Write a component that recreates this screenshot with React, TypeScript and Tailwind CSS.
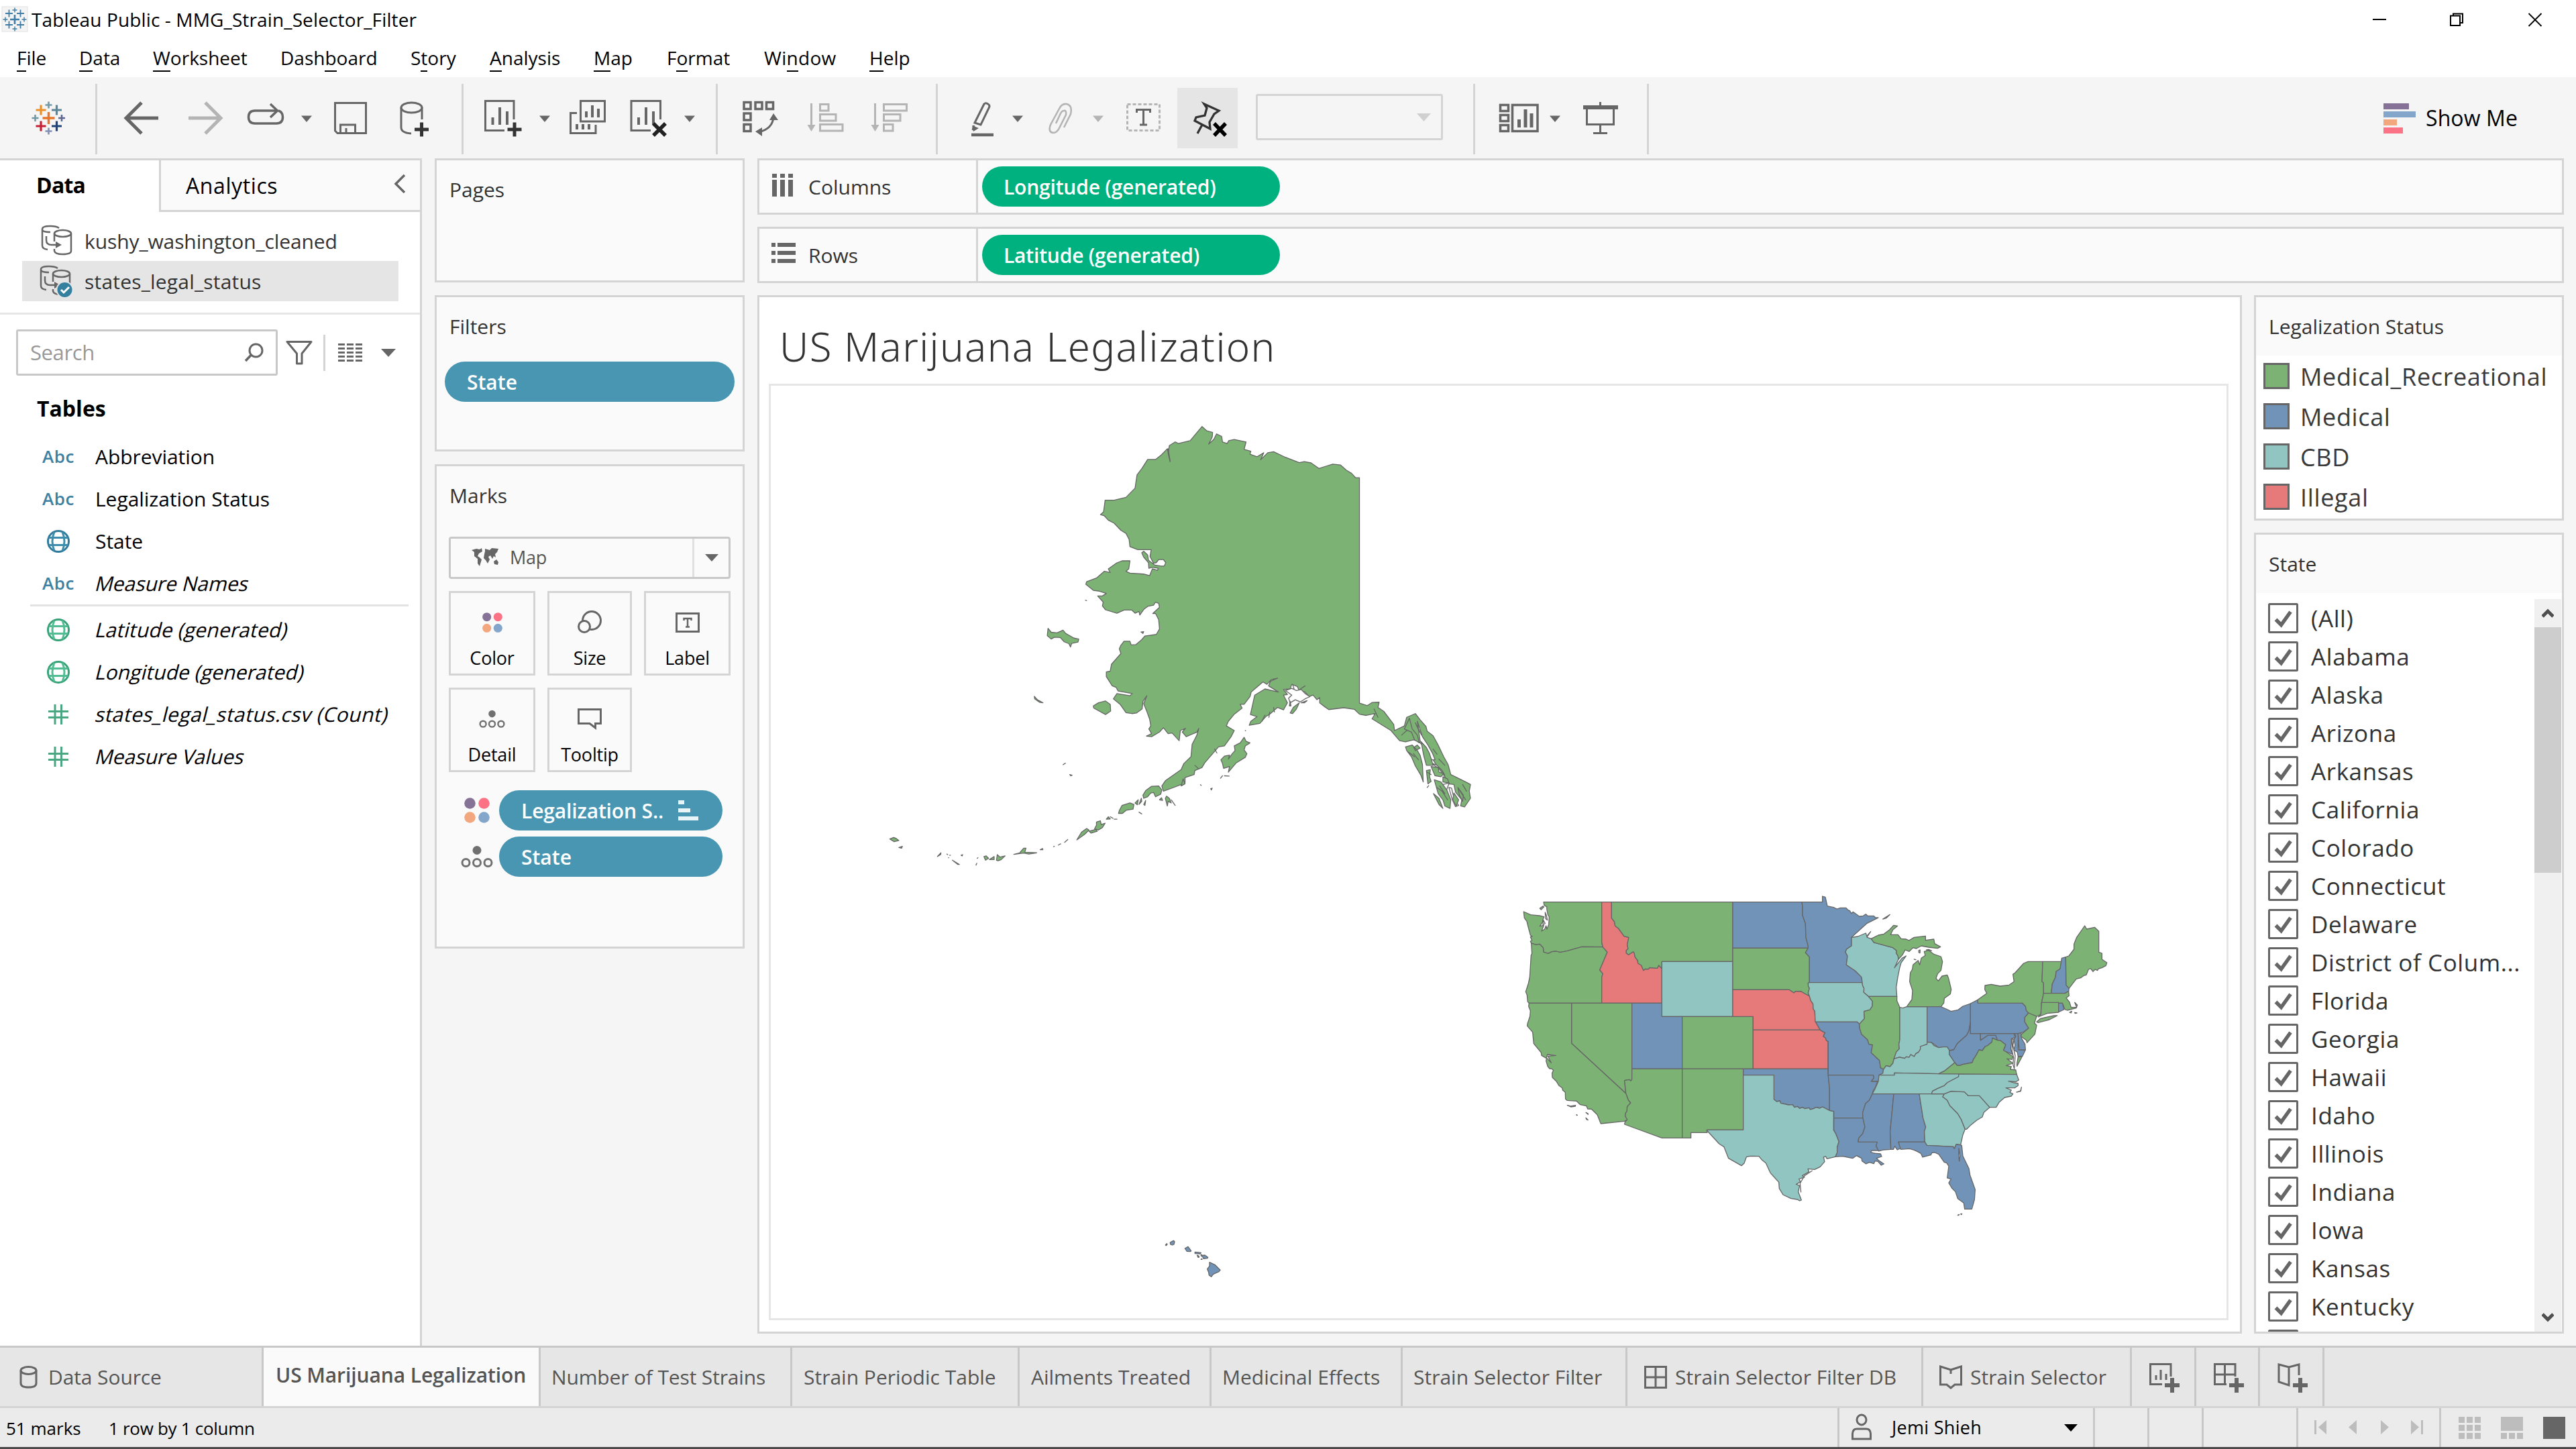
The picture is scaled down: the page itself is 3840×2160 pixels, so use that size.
import React from 'react';

type Kids = { children?: React.ReactNode };

/* A drawing whose viewBox is expressed in window coordinates. */
function Pic({ x, y, w, h, cls = '', children }: Kids & { x: number; y: number; w: number; h: number; cls?: string }) {
  return (
    <svg width={w} height={h} viewBox={`${x} ${y} ${w} ${h}`} fill="none" className={'block shrink-0 ' + cls}>
      {children}
    </svg>
  );
}

const GREEN = '#7cb274';
const BLUE = '#7193b8';
const TEAL = '#91c5c1';
const RED = '#e67979';

/* ---------- title bar and menu ---------- */

function Plus({ x, y, r, c, w }: { x: number; y: number; r: number; c: string; w: number }) {
  return <path d={`M${x - r} ${y}H${x + r}M${x} ${y - r}V${y + r}`} stroke={c} strokeWidth={w} />;
}

function TitleBar() {
  const c = '#3f7da6';
  return (
    <div className="flex h-[58px] shrink-0 items-center justify-between bg-white">
      <div className="flex items-center">
        <Pic x={2} y={8} w={40} h={40} cls="ml-[2px]">
          <rect x={3} y={9} width={38} height={37} fill="#f4f4f4" stroke="#e2e2e2" />
          <Plus x={22} y={28} r={7} c={c} w={2.6} />
          <Plus x={13.5} y={19} r={5.5} c={c} w={1.8} />
          <Plus x={30.5} y={19} r={5.5} c={c} w={1.8} />
          <Plus x={13.5} y={36} r={5.5} c={c} w={1.8} />
          <Plus x={30.5} y={36} r={5.5} c={c} w={1.8} />
          <Plus x={22} y={14} r={3.5} c={c} w={1.5} />
          <Plus x={22} y={42} r={3.5} c={c} w={1.5} />
          <Plus x={8} y={28} r={3.5} c={c} w={1.5} />
          <Plus x={36} y={28} r={3.5} c={c} w={1.5} />
        </Pic>
        <span className="ml-[5px] text-[28px] tracking-[0.13px] text-black">Tableau Public - MMG_Strain_Selector_Filter</span>
      </div>
      <Pic x={3530} y={12} w={310} h={30}>
        <path d="M3537 27H3557" stroke="#000" strokeWidth={2} />
        <path d="M3653 21.500H3667V36H3653ZM3657 21V18.500H3671V32H3667.500" stroke="#000" strokeWidth={2} />
        <path d="M3769.500 18L3788.500 37M3788.500 18L3769.500 37" stroke="#000" strokeWidth={1.8} />
      </Pic>
    </div>
  );
}

const U = ({ children }: Kids) => <span className="border-b-2 border-black">{children}</span>;

function MenuBar() {
  return (
    <div className="flex h-[57px] shrink-0 items-center bg-white pl-[25px] text-[28px] leading-[29px] text-black">
      <span className="w-[93px]"><U>F</U>ile</span>
      <span className="w-[110px]"><U>D</U>ata</span>
      <span className="w-[190px]"><U>W</U>orksheet</span>
      <span className="w-[194px]">Dash<U>b</U>oard</span>
      <span className="w-[118px]">S<U>t</U>ory</span>
      <span className="w-[155px]"><U>A</U>nalysis</span>
      <span className="w-[109px]"><U>M</U>ap</span>
      <span className="w-[145px]">F<U>o</U>rmat</span>
      <span className="w-[157px] tracking-[0.3px]">Wi<U>n</U>dow</span>
      <span className="w-[80px]"><U>H</U>elp</span>
    </div>
  );
}

/* ---------- toolbar ---------- */

const D = '#666666';
const G = '#b4b4b4';

function Sep({ cls }: { cls: string }) {
  return <div className={'-mt-[21px] h-[105px] w-[3px] shrink-0 bg-[#d4d4d4] ' + cls} />;
}
function Tool({ x, w, cls, children }: Kids & { x: number; w: number; cls: string }) {
  return <Pic x={x} y={146} w={w} h={60} cls={cls}>{children}</Pic>;
}
function Caret({ cls, c = D }: { cls: string; c?: string }) {
  return (
    <Pic x={0} y={146} w={16} h={60} cls={cls}>
      <path d="M0 172.500H16L8 182Z" fill={c} />
    </Pic>
  );
}

function Toolbar() {
  return (
    <div className="flex h-[121px] shrink-0 items-start bg-[#f5f5f5] pt-[31px]">
      <Tool x={46} w={54} cls="ml-[46px]">
        <Plus x={72.500} y={176} r={9} c="#e8762c" w={3.5} />
        <Plus x={61} y={164} r={7.5} c="#eb912b" w={3.2} />
        <Plus x={84.500} y={164} r={7.5} c="#5b879b" w={3.2} />
        <Plus x={61} y={188} r={7.5} c="#c72035" w={3.2} />
        <Plus x={84.500} y={188} r={7.5} c="#1f447e" w={3.2} />
        <Plus x={72.500} y={156.500} r={5} c="#7199a6" w={2.6} />
        <Plus x={72.500} y={195.500} r={5} c="#8091b5" w={2.6} />
        <Plus x={52.500} y={176} r={5} c="#7199a6" w={2.6} />
        <Plus x={92} y={176} r={5} c="#5c6692" w={2.6} />
      </Tool>
      <Sep cls="ml-[42px]" />
      <Tool x={184} w={54} cls="ml-[39px]">
        <path d="M236 176H189M211 153L188 176L211 199" stroke={D} strokeWidth={5} />
      </Tool>
      <Tool x={280} w={54} cls="ml-[42px]">
        <path d="M281 176H328M306 153L329 176L306 199" stroke={G} strokeWidth={5} />
      </Tool>
      <Tool x={366} w={60} cls="ml-[32px]">
        <path d="M414 165H380Q370.500 165 370.500 174.500Q370.500 184 380 184H412Q421.500 184 421.500 174.500Q421.500 167 415 165" stroke={D} strokeWidth={3.500} />
        <path d="M403 155L413.500 165L403 175" stroke={D} strokeWidth={3.500} />
      </Tool>
      <Caret cls="ml-[23px]" />
      <Tool x={496} w={54} cls="ml-[31px]">
        <path d="M499.500 153.500H545.500V198.500H503L499.500 195Z" stroke={D} strokeWidth={3} />
        <path d="M507.500 198V186H529.500V198M516 198V191" stroke={D} strokeWidth={3} />
      </Tool>
      <Tool x={594} w={50} cls="ml-[44px]">
        <ellipse cx={613.500} cy={160.500} rx={15.500} ry={7.500} stroke={D} strokeWidth={3} />
        <path d="M598 160V190Q598 198 613 199M629 160V178" stroke={D} strokeWidth={3} />
        <Plus x={628.500} y={193} r={10.500} c="#333" w={5} />
      </Tool>
      <Sep cls="ml-[44px]" />
      <Tool x={720} w={60} cls="ml-[29px]">
        <path d="M766 178V150.500H723.500V194.500H752" stroke={D} strokeWidth={3} />
        <path d="M734.500 186V175M745 186V160M756 186V166" stroke={D} strokeWidth={4} />
        <Plus x={767} y={193} r={10.500} c="#333" w={5} />
      </Tool>
      <Caret cls="ml-[24px]" />
      <Tool x={847} w={60} cls="ml-[27px]">
        <path d="M865.500 150.500H901.500V181H865.500Z" stroke={D} strokeWidth={3} />
        <path d="M874 175V166M883 175V157M892 175V162" stroke={D} strokeWidth={4} />
        <path d="M860 168.500H850.500V198.500H888V186" stroke={D} strokeWidth={3} />
        <path d="M860 193V185M869 193V185M878 193V185" stroke={D} strokeWidth={4} />
      </Tool>
      <Tool x={937} w={60} cls="ml-[30px]">
        <path d="M984.500 178V150.500H941V194.500H970" stroke={D} strokeWidth={3} />
        <path d="M952 186V175M963 186V160M974 186V166" stroke={D} strokeWidth={4} />
        <path d="M974 184L992 202M992 184L974 202" stroke="#222" strokeWidth={5.500} />
      </Tool>
      <Caret cls="ml-[23px]" />
      <Sep cls="ml-[31px]" />
      <Tool x={1105} w={58} cls="ml-[35px]">
        <path d="M1109 152.500H1119V162.500H1109ZM1126 152.500H1136V162.500H1126ZM1142.500 152.500H1152.500V162.500H1142.500ZM1109 169H1119V179H1109ZM1109 185.500H1119V195.500H1109Z" stroke={D} strokeWidth={3.500} />
        <path d="M1131 197Q1152 192 1153 174" stroke={D} strokeWidth={3} />
        <path d="M1147 179L1153 169L1160 179ZM1136 190L1126 196L1136 203Z" fill={D} />
      </Tool>
      <Tool x={1201} w={60} cls="ml-[38px]">
        <path d="M1209.500 154V190" stroke={G} strokeWidth={3} />
        <path d="M1203.500 186H1215.500L1209.500 196Z" fill={G} />
        <path d="M1222.500 155.500H1235V165H1222.500ZM1222.500 170.500H1246V180H1222.500ZM1222.500 185.500H1256V195H1222.500Z" stroke={G} strokeWidth={3} />
      </Tool>
      <Tool x={1296} w={60} cls="ml-[35px]">
        <path d="M1304.500 154V190" stroke={G} strokeWidth={3} />
        <path d="M1298.500 186H1310.500L1304.500 196Z" fill={G} />
        <path d="M1317.500 155.500H1351.500V165H1317.500ZM1317.500 170.500H1342V180H1317.500ZM1317.500 185.500H1331V195H1317.500Z" stroke={G} strokeWidth={3} />
      </Tool>
      <Sep cls="ml-[39px]" />
      <Tool x={1444} w={40} cls="ml-[46px]">
        <path d="M1453 183L1467 155Q1470 152 1474 156Q1476 158 1474 161L1462 186L1453 183ZM1452 187L1450 194" stroke={D} strokeWidth={3} />
        <path d="M1449 187L1459 191L1451 196Z" fill={D} />
        <path d="M1448 201H1481" stroke={D} strokeWidth={4.500} />
      </Tool>
      <Caret cls="ml-[25px]" />
      <Tool x={1560} w={42} cls="ml-[35px]">
        <path d="M1586 190L1596 170Q1599 157 1590 155Q1583 154 1579 162L1566 186Q1562 197 1570 198Q1576 198 1580 189L1589 171Q1590 164 1586 165Q1583 165 1581 169L1574 184" stroke={G} strokeWidth={2.600} />
      </Tool>
      <Caret cls="ml-[27px]" c={G} />
      <Tool x={1677} w={56} cls="ml-[32px]">
        <rect x={1680.500} y={155.500} width={48} height={39} stroke={G} strokeWidth={3} strokeDasharray="5 3" />
        <path d="M1694.500 168V163.500H1714.500V168M1704.500 163V186M1699 186H1710" stroke={D} strokeWidth={3} />
      </Tool>
      <div className="-mt-[15px] ml-[22px] flex h-[90px] w-[90px] shrink-0 items-center justify-center bg-[#e5e5e5]">
        <Pic x={1771} y={146} w={60} h={60}>
          <path d="M1796 155L1818 165L1811 170L1804 182L1805 192L1782 180L1784 175L1797 172L1800 161ZM1793 186L1786 199" stroke="#333" strokeWidth={3.300} />
          <path d="M1811 184L1828 202M1828 184L1811 202" stroke="#000" strokeWidth={5.500} />
        </Pic>
      </div>
      <div className="-mt-[6px] ml-[27px] flex h-[69px] w-[279px] shrink-0 items-center justify-end rounded-[3px] border-[3px] border-[#d4d4d4] pr-[15px]">
        <Pic x={0} y={0} w={21} h={12}><path d="M0 0H21L10.500 12Z" fill="#d0d0d0" /></Pic>
      </div>
      <Sep cls="ml-[45px]" />
      <Tool x={2233} w={64} cls="ml-[34px]">
        <path d="M2236.500 156.500H2248.500V165.500H2236.500ZM2236.500 171.500H2248.500V180.500H2236.500ZM2236.500 186.500H2248.500V195.500H2236.500ZM2254.500 156.500H2292V195.500H2254.500Z" stroke={D} strokeWidth={3.500} />
        <path d="M2264.500 190V178M2274 190V163M2283 190V169" stroke={D} strokeWidth={5} />
      </Tool>
      <Caret cls="ml-[13px]" />
      <Tool x={2358} w={56} cls="ml-[32px]">
        <path d="M2385.500 152V158M2365.500 160V185.500H2405.500V160M2385.500 186V198" stroke={D} strokeWidth={3} />
        <path d="M2360 157H2412V163H2360ZM2375 197H2396V200H2375Z" fill={D} />
      </Tool>
      <Sep cls="ml-[41px]" />
      <Pic x={3550} y={146} w={52} h={60} cls="ml-[1093px]">
        <path d="M3552 154H3590V163H3552Z" fill="#867297" />
        <path d="M3552 166H3600V175H3552Z" fill="#83a6ca" />
        <path d="M3552 178H3572V187H3552Z" fill="#f2a77f" />
        <path d="M3552 190H3581V199H3552Z" fill="#fb7384" />
      </Pic>
      <span className="ml-[13px] pt-[7px] text-[32px] leading-[45px] tracking-[0.1px] text-black">Show Me</span>
    </div>
  );
}

/* ---------- data pane ---------- */

function Cylinders({ active }: { active?: boolean }) {
  return (
    <Pic x={0} y={0} w={52} h={50} cls="ml-[60px]">
      <path d="M28 6Q24 3 15 3Q3 3 3 7.500V32Q3 37 11 38M3 8Q3 12 15 12M9 18V24Q9 31 17 31H26" stroke={D} strokeWidth={2.500} />
      <path d="M23 26L32 31L23 36Z" fill={D} />
      <ellipse cx={33.500} cy={14} rx={12.500} ry={5} stroke={D} strokeWidth={2.500} />
      <path d="M21 14V26M21 37V40Q22 45 33.500 45Q46 45 46 40V14" stroke={D} strokeWidth={2.500} />
      {active && (
        <>
          <circle cx={38.500} cy={38} r={13} fill="#e5e5e5" />
          <circle cx={38.500} cy={38} r={11} fill="#35809f" />
          <path d="M33 38L37 42L45 34" stroke="#fff" strokeWidth={3} />
        </>
      )}
    </Pic>
  );
}

function Globe({ c, t }: { c: string; t: string }) {
  return (
    <Pic x={0} y={0} w={34} h={34}>
      <circle cx={17} cy={17} r={15.500} fill="#fff" stroke={c} strokeWidth={3} />
      <path d="M11 3Q5 17 11 31M23 3Q29 17 23 31M3 11.500H31M3 22.500H31" stroke={t} strokeWidth={3} />
    </Pic>
  );
}
const Hash = () => (
  <Pic x={0} y={0} w={32} h={32}>
    <path d="M1 11.500H31M1 20.500H31M11 1V31M20.500 1V31" stroke="#4aa781" strokeWidth={3} />
  </Pic>
);
const Abc = () => <span className="text-[26px] font-semibold tracking-[0.5px] text-[#3c81a1]">Abc</span>;

function Field({ icon, children, italic, track = '' }: Kids & { icon: React.ReactNode; italic?: boolean; track?: string }) {
  return (
    <div className="flex h-[63px] items-center">
      <div className="flex w-[142px] shrink-0 justify-center pl-[32px]">{icon}</div>
      {italic ? (
        <span className={'ml-px inline-block -skew-x-[14deg] whitespace-nowrap text-[30px] text-black ' + track}>{children}</span>
      ) : (
        <span className="whitespace-nowrap text-[30px] tracking-[-0.05px] text-black">{children}</span>
      )}
    </div>
  );
}

function DataPane() {
  return (
    <div className="flex w-[629px] shrink-0 flex-col border-t-[3px] border-r-[3px] border-[#d4d4d4] bg-white">
      <div className="flex h-[77px] shrink-0">
        <div className="flex w-[237px] items-center pb-[3px] pl-[54px] text-[32px] font-bold tracking-[-0.8px] text-black">Data</div>
        <div className="flex flex-1 items-center justify-between border-b-[3px] border-l-[3px] border-[#d4d4d4] bg-[#fafafa] pl-[37px] pr-[21px]">
          <span className="pt-px text-[32px] tracking-[0.6px] text-black">Analytics</span>
          <Pic x={0} y={0} w={18} h={30} cls="-mt-[4px]"><path d="M16 2L3 15L16 28" stroke={D} strokeWidth={3.500} /></Pic>
        </div>
      </div>
      <div className="mt-[13px] flex h-[60px] shrink-0 items-center">
        <Cylinders />
        <span className="ml-[14px] text-[30px] tracking-[-0.1px] text-[#333]">kushy_washington_cleaned</span>
      </div>
      <div className="ml-[33px] flex h-[60px] w-[561px] shrink-0 items-center bg-[#e5e5e5]">
        <div className="-ml-[35px]"><Cylinders active /></div>
        <span className="ml-[16px] text-[30px] tracking-[0.2px] text-[#333]">states_legal_status</span>
      </div>
      <div className="mt-[17px] h-[3px] shrink-0 bg-[#e6e6e6]" />
      <div className="mt-[22px] flex h-[69px] shrink-0 items-center">
        <div className="ml-[24px] flex h-[69px] w-[390px] items-center justify-between rounded-[3px] border-[3px] border-[#c8c8c8] pr-[17px] pl-[18px]">
          <span className="text-[31px] tracking-[-0.4px] text-[#999]">Search</span>
          <Pic x={0} y={0} w={30} h={30}>
            <circle cx={17.500} cy={11.500} r={9.500} stroke={D} strokeWidth={3} />
            <path d="M10.500 18L2 27" stroke={D} strokeWidth={3.500} />
          </Pic>
        </div>
        <Pic x={0} y={0} w={40} h={40} cls="ml-[12px]">
          <path d="M2 3.500H38L24 21V36H16.500V21Z" stroke={D} strokeWidth={3} strokeLinejoin="round" />
        </Pic>
        <div className="ml-[16px] h-[54px] w-[3px] bg-[#d4d4d4]" />
        <Pic x={0} y={0} w={36} h={29} cls="ml-[19px]">
          <path d="M0 2.500H36M0 8.500H36M0 14.500H36M0 20.500H36M0 26.500H36" stroke={D} strokeWidth={3} strokeDasharray="10 3" />
        </Pic>
        <Pic x={0} y={0} w={22} h={12} cls="ml-[28px]"><path d="M0 0H22L11 12Z" fill={D} /></Pic>
      </div>
      <div className="mt-[19px] flex h-[60px] shrink-0 items-center pl-[55px] text-[32px] font-bold text-black">Tables</div>
      <div className="mt-[10px]">
        <Field icon={<Abc />}>Abbreviation</Field>
        <Field icon={<Abc />}>Legalization Status</Field>
        <Field icon={<Globe c="#2f7a9b" t="#3c8cae" />}>State</Field>
        <Field icon={<Abc />} italic>Measure Names</Field>
        <div className="mr-[17px] mb-[3px] ml-[45px] h-[3px] bg-[#e2e2e2]" />
        <Field icon={<Globe c="#36a277" t="#52bd92" />} italic track="tracking-[0.15px]">Latitude (generated)</Field>
        <Field icon={<Globe c="#36a277" t="#52bd92" />} italic track="tracking-[0.1px]">Longitude (generated)</Field>
        <Field icon={<Hash />} italic track="tracking-[0.5px]">states_legal_status.csv (Count)</Field>
        <Field icon={<Hash />} italic>Measure Values</Field>
      </div>
    </div>
  );
}

/* ---------- cards ---------- */

function Card({ title, cls, children }: Kids & { title: string; cls: string }) {
  return (
    <div className={'flex shrink-0 flex-col border-[3px] border-[#d4d4d4] bg-[#fafafa] ' + cls}>
      <div className="flex h-[87px] shrink-0 items-center pl-[19px] text-[30px] text-[#333]">{title}</div>
      {children}
    </div>
  );
}

function Dots({ s }: { s: number }) {
  return (
    <svg width={s} height={s} viewBox="0 0 38 38" className="block shrink-0">
      <circle cx={8.500} cy={8.500} r={8.300} fill="#867297" />
      <circle cx={29.500} cy={8.500} r={8.300} fill="#fb7384" />
      <circle cx={8.500} cy={29.500} r={8.300} fill="#f2a77f" />
      <circle cx={29.500} cy={29.500} r={8.300} fill="#83a6ca" />
    </svg>
  );
}
function DetailIcon({ w }: { w: number }) {
  return (
    <svg width={w} viewBox="0 0 48 34" fill="none" className="block shrink-0">
      <circle cx={24} cy={7.500} r={6.500} fill="#707070" />
      <g stroke="#707070" strokeWidth={3}>
        <circle cx={7.500} cy={26} r={5.500} />
        <circle cx={24} cy={26} r={5.500} />
        <circle cx={40.500} cy={26} r={5.500} />
      </g>
    </svg>
  );
}

function MarkButton({ label, cls, children }: Kids & { label: string; cls: string }) {
  return (
    <div className={'flex h-[126px] flex-col items-center border-[3px] border-[#d4d4d4] ' + cls}>
      <div className="mt-[18px] flex h-[52px] items-center">{children}</div>
      <span className="mt-[8px] text-[27px] leading-[38px] tracking-[-0.2px] text-black">{label}</span>
    </div>
  );
}

function Cards() {
  return (
    <div className="ml-[19px] flex w-[462px] shrink-0 flex-col gap-[19px]">
      <Card title="Pages" cls="h-[185px]" />
      <Card title="Filters" cls="h-[233px]">
        <div className="ml-[12px] mt-[9px] flex h-[60px] w-[432px] items-center rounded-full bg-[#4996b2] pl-[33px] text-[30px] font-semibold text-white">State</div>
      </Card>
      <Card title="Marks" cls="h-[722px]">
        <div className="mt-[18px] ml-[18px] flex h-[63px] w-[420px] shrink-0 rounded-[4px] border-[3px] border-[#c8c8c8]">
          <div className="flex w-[363px] items-center border-r-[3px] border-[#e0e0e0] pl-[31px]">
            <Pic x={0} y={0} w={40} h={30}>
              <path d="M0 3L7 1L12 2L15 0L16 5L11 8L9 12L12 14L15 17L12 27L9 23L9 16L4 12L4 6Z" fill={D} />
              <path d="M20 1L27 3L30 0L40 1L38 6L35 9L36 14L33 12L31 16L28 11L25 13L27 17L24 23L21 18L18 15L19 9L20 5Z" fill={D} />
              <path d="M33 20L37 17L40 21L39 25L34 24Z" fill={D} />
            </Pic>
            <span className="ml-[17px] text-[27px] tracking-[-0.3px] text-[#555]">Map</span>
          </div>
          <div className="flex flex-1 items-center justify-center">
            <Pic x={0} y={0} w={20} h={11}><path d="M0 0H20L10 11Z" fill={D} /></Pic>
          </div>
        </div>
        <div className="mt-[18px] ml-[18px] grid w-[420px] shrink-0 grid-cols-[129px_126px_129px] gap-x-[18px] gap-y-[18px]">
          <MarkButton label="Color" cls="w-[129px]"><Dots s={30} /></MarkButton>
          <MarkButton label="Size" cls="w-[126px]">
            <Pic x={0} y={0} w={38} h={36}>
              <circle cx={22} cy={15} r={13.500} stroke={D} strokeWidth={3} />
              <circle cx={11} cy={24} r={8.500} stroke={D} strokeWidth={3} fill="#fafafa" />
            </Pic>
          </MarkButton>
          <MarkButton label="Label" cls="w-[129px]">
            <Pic x={0} y={0} w={36} h={30}>
              <path d="M1.500 1.500H34.500V28.500H1.500Z" stroke={D} strokeWidth={3} />
              <path d="M12.500 12V9H23.500V12M18 9V21M15 21.500H21" stroke={D} strokeWidth={2.500} />
            </Pic>
          </MarkButton>
          <MarkButton label="Detail" cls="w-[129px]"><DetailIcon w={39} /></MarkButton>
          <MarkButton label="Tooltip" cls="w-[126px]">
            <Pic x={0} y={0} w={36} h={32}>
              <path d="M1.500 1.500H34.500V22.500H26.500V29L18 22.500H1.500Z" stroke={D} strokeWidth={3} />
            </Pic>
          </MarkButton>
        </div>
        <div className="mt-[27px] flex h-[60px] shrink-0 items-center">
          <div className="flex w-[93px] justify-center pl-[26px]"><Dots s={38} /></div>
          <div className="flex h-[60px] w-[333px] items-center rounded-full bg-[#4996b2] pl-[33px] text-[30px] font-semibold tracking-[-0.15px] text-white">
            Legalization S..
            <Pic x={0} y={0} w={30} h={30} cls="ml-[22px]">
              <path d="M0 0H9V6H0ZM0 12H18V18H0ZM0 24H30V30H0Z" fill="#e9f4f8" />
            </Pic>
          </div>
        </div>
        <div className="mt-[9px] flex h-[60px] shrink-0 items-center">
          <div className="flex w-[93px] justify-center pl-[26px]"><DetailIcon w={48} /></div>
          <div className="flex h-[60px] w-[333px] items-center rounded-full bg-[#4996b2] pl-[33px] text-[30px] font-semibold text-white">State</div>
        </div>
      </Card>
    </div>
  );
}

/* ---------- shelves ---------- */

function Shelf({ label, pill, children }: Kids & { label: string; pill: string }) {
  return (
    <div className="flex h-[84px] shrink-0 items-center border-[3px] border-[#d4d4d4] bg-[#fafafa]">
      <div className="flex h-full w-[326px] items-center border-r-[3px] border-[#d4d4d4] pl-[18px]">
        {children}
        <span className="ml-[23px] text-[30px] text-[#333]">{label}</span>
      </div>
      <div className="ml-[6px] flex h-[60px] w-[444px] items-center rounded-full bg-[#00b180] pl-[32px] text-[30px] font-semibold tracking-[-0.2px] text-white">{pill}</div>
    </div>
  );
}

/* ---------- map ---------- */

type Shape = [string, string];

const WEST: Shape[] = [
  [GREEN, 'M183,104L443,104L443,285L448,305L354,304L290,322L257,329L240,324L220,326L204,334L183,328L181,308L165,292L150,295L128,288L124,280L131,275L124,260L132,258L124,252L121,240L114,215L108,190L97,175L94,147L125,161L165,165L185,170L180,182L178,195L166,212L184,208L174,234L188,225L194,210L198,225L206,205L208,170L202,160L198,140L197,125L186,119Z'],
  [GREEN, 'M128,288L150,295L165,292L181,308L183,328L204,334L220,326L240,324L257,329L290,322L354,304L448,305L468,328L434,408L448,424L443,440L443,556L118,556L112,550L109,520L103,505L115,468L121,440L127,342L131,335Z'],
  [RED, 'M443,104L487,104L487,176L500,192L503,211L518,222L543,257L564,262L557,295L561,313L553,320L553,332L563,340L583,326L588,331L592,350L604,366L605,378L620,387L630,410L637,403L652,404L657,397L692,400L698,387L712,402L712,556L443,556L443,440L448,424L434,408L468,328L448,305L443,285Z'],
  [GREEN, 'M487,104L1029,104L1029,370L712,370L712,402L698,387L692,400L657,397L652,404L637,403L630,410L620,387L605,378L604,366L592,350L588,331L583,326L563,340L553,332L553,320L561,313L557,295L564,262L543,257L518,222L503,211L500,192L487,176Z'],
  [TEAL, 'M712,370H1029V616H712Z'],
  [GREEN, 'M308,556H578V897L573,904L566,898L545,902L551,960L308,736Z'],
  [BLUE, 'M578,556H712V616H803V850H578Z'],
  [GREEN, 'M803,616H1120V850H803Z'],
  [GREEN, 'M578,850H803V1159H712L545,1098L547,1088L557,1077L548,1062L549,1048L555,1040L557,1018L572,1002L562,990L551,960L545,902L566,898L573,904L578,897Z'],
  [GREEN, 'M803,850H1076V1123H913L915,1135H842V1159H803Z'],
  [GREEN, 'M118,556H308V736L551,960L562,990L572,1002L557,1018L555,1040L549,1048L548,1062L557,1077L545,1084L439,1095L423,1055L397,1030L380,1029L375,1016L347,1010L330,994L288,991L281,985L280,955L268,945L267,936L252,925L241,907L222,888L221,869L227,857L220,850L210,849L202,840L194,815L196,803L174,790L172,777L139,737L134,686L110,658L111,648L122,615L124,590L116,570Z'],
  ['#fff', 'M196,800L200,786L238,790L202,793L217,823Z'],
  ['#fff', 'M190,150L196,165L200,185L192,178ZM182,185L190,200L180,205Z'],
  [BLUE, 'M1029,104H1338L1341,125L1341,163L1354,200L1356,262L1366,300L1366,310H1029Z'],
  [GREEN, 'M1029,310H1366L1354,330L1372,350V464L1366,466L1367,480L1372,490L1366,510L1372,525L1350,513L1335,504L1310,503L1302,510L1281,496H1029Z'],
  [RED, 'M1029,496H1281L1302,510L1310,503L1335,504L1350,513L1372,525L1378,545L1388,560L1389,582L1396,592L1398,638L1408,655L1420,676H1120V616H1029Z'],
  [RED, 'M1120,676H1420L1435,685L1442,688L1434,704L1444,712L1447,722L1455,728V850H1120Z'],
  [BLUE, 'M1076,850H1455L1456,880L1462,940L1462,1036L1430,1020L1418,1026L1402,1022L1390,1028L1376,1032L1370,1024L1352,1028L1340,1022L1328,1027L1318,1018L1305,1022L1296,1010L1278,1011L1243,1003L1240,993L1225,996L1213,986V878H1076Z'],
  [TEAL, 'M1076,878H1213V986L1225,996L1240,993L1243,1003L1278,1011L1296,1010L1305,1022L1318,1018L1328,1027L1340,1022L1352,1028L1370,1024L1376,1032L1390,1028L1402,1022L1418,1026L1430,1020L1462,1036L1480,1040V1124L1490,1140L1504,1175L1496,1200L1496,1225L1488,1243L1450,1252L1445,1242L1435,1245L1440,1265L1420,1288L1395,1300L1365,1297L1370,1310L1340,1328L1350,1335L1325,1342L1332,1355L1313,1366L1328,1372L1322,1400L1336,1437L1328,1440L1318,1434L1290,1430L1254,1413L1237,1385L1235,1357L1215,1335L1197,1315L1177,1271L1160,1258L1146,1241L1108,1240L1090,1244L1080,1272L1068,1283L1010,1250L990,1199L968,1185L913,1125V1123H1076Z'],
  [GREEN, 'M289,1013L304,1017L326,1013L325,1017L305,1020ZM330,1055L334,1057L331,1058ZM372,1045L382,1050L382,1054ZM372,1069L382,1079L375,1076ZM166,132L180,122L184,126L172,138Z'],
  ['none', 'M1334,1402L1330,1362L1350,1328L1385,1305'],
];

const EAST: Shape[] = [
  [BLUE, 'M18,104H110V78L123,82L132,122L160,128L175,135L190,130L215,130L225,140L232,143L240,155L247,148L275,168L292,166L304,158L312,166L340,166L347,174L360,174L308,200L240,262L240,300L218,315L213,328L222,345L217,385L257,412L285,440L288,464H52V350L34,330L46,310L46,300L36,262L34,200L21,163L21,125Z'],
  [TEAL, 'M46,466L52,464H288L290,478L296,490L295,508L316,526L334,548L333,570L322,586L296,593L298,625L275,650L265,640H80L78,638L76,592L69,582L68,560L58,545L52,525L46,510L52,490L47,480Z'],
  [BLUE, 'M80,640H265L275,650L277,670L285,695L312,720L318,740L334,742L328,778L365,812L370,845L383,852L380,870L363,885L360,906L328,906L340,890L337,878H136V850V728L127,722L124,712L114,704L122,688L115,685L100,676L88,655Z'],
  [BLUE, 'M136,878H337L340,890L328,906H356L348,930L336,950L333,962L320,990L303,1005L298,1020L290,1045L291,1070H161V1040L142,1036V940L136,880Z'],
  [BLUE, 'M161,1070H291L296,1090L300,1110L290,1140L272,1160L270,1177H355L350,1195L362,1215L330,1215L326,1222L340,1227L370,1230L375,1242L352,1250L365,1262L385,1275L373,1281L358,1264L345,1262L340,1274L320,1268L305,1275L287,1262L285,1250L262,1238L245,1250L200,1241L168,1243L176,1225V1200L184,1175L170,1140L161,1124Z'],
  [TEAL, 'M240,262L268,258L304,243L310,262L328,268L340,285L425,308L442,322L440,332L448,345L450,360L432,398L466,355L484,345L462,375L455,400L447,440L440,485L443,526H316L295,508L296,490L290,478L288,464L285,440L257,412L217,385L222,345L213,328L218,315L240,300Z'],
  [GREEN, 'M316,526H443L443,545L456,575V720L452,740L454,760L440,775L430,805L425,825L412,840L395,836L383,852L370,845L365,812L328,778L334,742L318,740L312,720L285,695L277,670L275,650L298,625L296,593L322,586L333,570L334,548Z'],
  [TEAL, 'M456,575L470,578L487,572H578V740L548,750L548,762L540,775L528,782L520,795L505,786L498,798L485,796L478,803L455,798L430,805L440,775L454,760L452,740L456,720Z'],
  [GREEN, 'M487,572L510,540L513,500L500,460L503,420L512,405L515,385L538,365L545,385L552,355L570,343L565,325L585,320L610,338L640,348L647,370L640,410L625,425L618,445L628,457L645,435L668,430L674,445L686,495L682,515L655,535L653,555L640,572Z'],
  [GREEN, 'M328,268L360,252L385,247L410,228L428,208L446,211L425,228L415,250L448,250L462,268L485,270L497,276L520,262L571,256V275L608,270L612,290L638,304L625,311L585,306L552,300L530,312L515,308L498,325L480,318L468,340L450,360L448,345L440,332L442,322L425,308L340,285ZM380,180L412,160L395,176ZM310,260L326,236L312,252ZM541,320L547,318L546,332L541,330ZM575,318L598,322L585,316ZM520,360L528,362Z'],
  [BLUE, 'M578,572H640L670,585L685,593L717,586L738,570L772,558V640L765,680L755,700L738,715L715,735L710,742L697,765L678,768L668,752L630,755L598,732L578,730Z'],
  [TEAL, 'M578,740L578,730L598,732L608,745L630,755L650,752L668,752L678,768L677,785L702,822L655,860L630,872L432,868V878H363L380,870L383,852L395,836L412,840L425,825L430,805L455,798L478,803L485,796L498,798L505,786L520,795L528,782L540,775L548,762L548,750Z'],
  [TEAL, 'M363,878H432V868L630,872H719V885L690,900L668,912L655,925L625,938L602,950L598,962H333L345,940L360,906Z'],
  [BLUE, 'M333,962H429L413,1130L416,1210L385,1212L362,1218L350,1195L355,1177H270L272,1160L290,1140L300,1110L291,1070L290,1045L298,1020L303,1005L320,990Z'],
  [BLUE, 'M429,962H543L560,1070L572,1110L566,1130L568,1177H450L460,1205L445,1212L433,1196L428,1210H416L413,1130Z'],
  [TEAL, 'M543,962H655L648,975L668,990L680,1015L715,1050L730,1075L748,1120L738,1145L728,1190L708,1188L700,1207L695,1198L577,1192L568,1177L566,1130L572,1110L560,1070Z'],
  [BLUE, 'M450,1177H568L577,1192L695,1198L700,1207L708,1188L728,1190L733,1193L738,1240L765,1295L770,1325L793,1390L790,1435L778,1477H746L742,1450L715,1430L705,1400L690,1385L675,1360L685,1343L668,1338L675,1285L665,1270L655,1268L630,1232L612,1224L600,1225L595,1235L558,1245L550,1228L535,1220L520,1213L500,1207L460,1210ZM715,1504L722,1501L719,1505ZM728,1499L734,1498L731,1502Z'],
  [TEAL, 'M655,962L685,950L745,953L762,970H812L858,1022L832,1045L825,1065L800,1080L775,1100L755,1120L748,1120L730,1075L715,1050L680,1015L668,990L648,975Z'],
  [TEAL, 'M719,873H978L988,900L975,908L942,905L965,912L985,915L985,925L970,935L930,935L955,945L948,955L962,962L955,972L925,978L900,1000L887,1022H858L812,970H762L745,953L685,950L655,962H598L602,950L625,938L655,925L668,912L690,900L719,885ZM978,954L997,950L1000,932L996,948Z'],
  [BLUE, 'M772,640V692H817V722L850,700L885,700L893,722L870,712L868,730L850,745L838,750L825,768L810,765L800,785L785,808L780,822L738,830L725,835L712,834L702,822L677,785L678,768L697,765L710,742L715,735L738,715L755,700L765,680Z'],
  [GREEN, 'M630,872L655,860L702,822L712,834L725,835L738,830L780,822L785,808L800,785L810,765L825,768L838,750L850,745L868,730L870,712L893,722L905,722L930,742L920,765L940,780L962,795L958,808L935,805L962,825L932,835L955,840L950,852L975,855L978,875ZM1003,795L980,838L980,825L985,797Z'],
  [BLUE, 'M817,692H985V765H1018L1005,793L985,795L982,775L965,765L972,745L966,720L975,705L965,685L972,710L955,715L955,735L952,760L960,785L920,768L930,742L905,722L893,722L885,700L850,700L817,722Z'],
  [BLUE, 'M985,692L998,686L1000,712L1016,740L1018,765H990Z'],
  [BLUE, 'M772,558L805,541V556H1004L1018,570L1022,590L1032,600L1015,620L1015,640L1032,668L1010,685L985,692H772Z'],
  [GREEN, 'M1032,600L1068,615L1058,645L1068,655L1060,695L1025,733L1022,722L998,705L1000,695L1032,668L1015,640L1015,620Z'],
  [GREEN, 'M805,541L845,512L836,495L837,477L865,472L905,480L945,475L967,460L962,427L972,420L1010,378L1030,370H1095L1092,460L1099,465V512L1090,553L1087,606L1075,612L1068,615L1032,600L1022,590L1018,570L1004,556H805ZM1068,640L1085,625L1145,612L1160,612L1125,630L1075,643Z'],
  [GREEN, 'M1095,370H1180L1173,403L1155,415L1152,440L1138,470L1133,512H1099V465L1092,460Z'],
  [BLUE, 'M1180,355L1198,350L1200,475L1213,490L1211,503L1195,512H1133L1138,470L1152,440L1155,415L1173,403Z'],
  [GREEN, 'M1198,350L1212,345L1235,315V292L1247,262L1283,210L1292,225L1327,217L1346,235V328L1360,333V360L1382,375L1378,388L1360,398L1345,402L1340,410L1330,405L1320,415L1310,402L1300,405L1290,430L1280,432L1265,443L1245,448L1213,490L1200,475Z'],
  [GREEN, 'M1099,512H1195L1211,503L1213,523L1200,533L1215,552L1222,575L1247,575L1238,553L1250,565L1245,578L1205,588L1195,585L1183,556H1090ZM1215,597L1225,592L1222,600ZM1238,598L1248,600L1240,602Z'],
  [GREEN, 'M1090,553H1166V597L1115,602L1075,618L1087,606Z'],
  [BLUE, 'M1166,556H1183L1190,585L1166,596Z'],
  ['#fff', 'M720,1205L725,1240L722,1263L719,1235ZM960,715L966,720L962,745L966,765L972,790L968,850L962,830L965,800L958,770Z'],
];

const ALASKA =
  'M838,78L850,92L865,97L864,112L855,135L868,120L875,102L888,110L890,128L902,133L906,124L920,120L950,128L945,152L962,158L960,168L978,176L995,163L987,186L1005,163L1020,160L1050,178L1085,195L1098,192L1115,196L1135,214L1150,208L1170,200L1190,203L1205,220L1218,230L1228,244L1238,244V976L1258,984L1270,974L1288,973L1285,990L1300,1003L1325,1045L1327,1065L1352,1050L1358,1022L1380,1010L1392,1030L1407,1052L1410,1067L1425,1082L1437,1110L1452,1150L1463,1175L1470,1208L1508,1232L1520,1240L1517,1262L1520,1285L1505,1313L1495,1310L1498,1290L1482,1265L1478,1240L1462,1238L1455,1215L1435,1180L1420,1150L1400,1115L1388,1100L1375,1095L1355,1102L1340,1098L1318,1065L1270,1027L1278,1010L1255,1016L1238,1012L1225,996L1198,991L1160,997L1150,988L1137,975L1137,958L1130,965L1120,950L1110,955L1100,940L1085,935L1080,922L1066,915L1062,930L1045,932L1055,948L1045,950L1055,975L1045,998L1030,990L1010,1012L1000,1020L985,1042L958,1048L962,1035L978,1020L961,1013L972,950L998,930L1032,940L1007,920L1012,905L1030,895L1014,900L1003,915L993,907L963,940L960,955L945,980L935,980L940,992L920,1012L905,1035L900,1050L920,1065L912,1085L895,1115L880,1118L845,1170L838,1185L820,1195L818,1208L795,1218L795,1235L770,1248L740,1262L736,1245L745,1228L785,1192L792,1172L810,1150L813,1110L825,1080L830,1058L825,1070L798,1085L788,1070L796,1058L783,1065L780,1098L762,1073L752,1075L740,1056L730,1070L710,1085L697,1083L710,1075L703,1060L708,1050L705,1028L697,1000L690,978L698,952L688,970L686,995L672,1008L660,1010L645,1007L630,980L613,962L622,945L655,952L661,945L625,937L620,925L610,920L595,890L595,875L605,872L608,850L632,815L628,800L632,788L640,775L655,775L658,787L670,786L685,770L693,758L722,753L730,735L728,705L720,685L713,685L730,665L728,652L720,648L715,658L700,662L690,672L680,690L678,678L668,684L660,674L640,674L622,684L593,673L585,660L587,648L573,628L585,628L595,620L575,612L562,610L543,590L545,582L570,570L590,548L605,552L600,540L620,522L635,514L655,514L652,540L645,548L655,554L690,557L705,562L712,540L725,545L727,538L712,535L703,538L702,520L690,502L685,488L690,483L700,495L702,512L718,528L735,531L742,531L746,520L740,510L728,510L722,520L715,522L706,500L709,478L675,478L655,468L653,445L645,425L632,415L615,392L600,382L590,368L580,364L588,355L592,317L615,317L645,308L668,278L673,235L685,215L690,205L700,185L720,185L735,170L750,150L757,192L752,165L755,140L770,128L778,133L808,124Z';

const ISLANDS =
  'M447,733L455,746L470,748L485,739L492,750L513,765L525,768L523,778L507,782L504,794L500,783L488,777L478,763L463,762L455,768L445,757Z' +
  'M412,954L420,965L434,975L425,973L413,962ZM562,985L575,975L593,969L605,980L606,1002L593,1013L563,992Z' +
  'M945,1087L950,1100L960,1105L948,1115L945,1128L952,1140L948,1152L925,1170L915,1185L905,1200L908,1182L893,1188L890,1172L886,1160L895,1148L908,1145L905,1158L915,1140L922,1130L920,1115L935,1105Z' +
  'M1062,1008L1070,990L1085,975L1078,995L1068,1010ZM1090,975L1105,968L1098,975ZM1060,985L1062,970L1064,985Z' +
  'M736,1258L728,1245L710,1246L695,1260L688,1275L690,1285L700,1280L708,1268L715,1266L720,1280L733,1272ZM684,1285L678,1305L685,1295ZM668,1300L676,1290L674,1306ZM690,1305L695,1292L693,1308ZM665,1305L655,1300L635,1308L628,1325L626,1334L636,1334L645,1324L663,1320Z' +
  'M730,1290L735,1283L738,1292ZM745,1285L750,1310L752,1295L760,1300L755,1285L748,1278ZM760,1290L770,1308ZM790,1222L785,1245L795,1238ZM678,1330L685,1336ZM885,1220L890,1212ZM895,1212L907,1213ZM834,1241L836,1243ZM860,1254L864,1252L862,1258Z' +
  'M595,1353L600,1345L605,1352ZM605,1345L612,1350ZM615,1353L622,1353ZM570,1372L570,1362L580,1358L582,1370L592,1366L585,1380L575,1388L565,1384ZM551,1392L568,1386L572,1392L556,1398ZM520,1420L532,1395L545,1383L551,1388L540,1402Z' +
  'M489,1428L497,1419ZM473,1437L479,1433ZM461,1442L463,1441ZM427,1452L433,1448L434,1452ZM360,1467L375,1462L385,1447L391,1447L388,1460L418,1462L398,1466L385,1463Z' +
  'M284,1474L290,1472L296,1480L288,1486ZM298,1484L310,1474L310,1484ZM316,1486L318,1468L325,1476L338,1472L328,1484L320,1488ZM264,1502L266,1496ZM267,1480L269,1478ZM204,1486L222,1500L218,1500ZM226,1470L230,1468L229,1472ZM190,1466L192,1468ZM166,1474L174,1468L175,1462ZM197,1470L199,1470ZM194,1478L195,1478Z' +
  'M45,1417L55,1412L62,1416L68,1422L56,1426ZM68,1445L77,1441L75,1447ZM485,1176L491,1171ZM502,1208L508,1210L505,1212ZM542,642L545,643ZM948,1065L949,1066ZM683,745L690,744L688,750Z';

/* Fjords and channels cut into the southern coast. */
const INLETS =
  'M1050,935L1066,928L1078,935L1090,932L1100,945L1112,955L1100,962L1088,972L1075,965L1062,975L1058,960L1066,950ZM1068,915L1072,930ZM1100,920L1088,930ZM990,1035L998,1015ZM1008,1022L1010,1005ZM1022,1005L1020,990ZM930,1115L940,1125ZM900,1165L915,1160ZM820,1178L830,1190ZM870,1125L876,1138ZM752,150L757,190Z' +
  'M1385,1035L1392,1098L1400,1110L1410,1140L1422,1160L1430,1160L1424,1140L1412,1112L1398,1085ZM1450,1240L1458,1262L1466,1235ZM1465,1250L1474,1290L1482,1312L1490,1308L1478,1285L1472,1252ZM1420,1170L1432,1182L1445,1190L1455,1210L1448,1195L1435,1178Z';

const PANHANDLE =
  'M1355,1118L1372,1112L1385,1130L1392,1145L1398,1175L1400,1232L1394,1210L1380,1180L1370,1150L1358,1130Z' +
  'M1395,1102L1408,1120L1416,1140L1422,1165L1425,1178L1408,1178L1402,1150L1398,1125Z' +
  'M1365,1025L1372,1060L1385,1080L1390,1105L1378,1095L1370,1070L1352,1060ZM1408,1195L1418,1192L1416,1215L1420,1230L1412,1238Z' +
  'M1420,1182L1438,1185L1440,1200L1452,1205L1445,1215L1430,1212ZM1428,1225L1445,1232L1460,1258L1470,1290L1468,1318L1455,1310L1450,1290L1438,1270ZM1426,1270L1440,1285L1450,1318L1440,1305ZM1450,1215L1462,1222L1465,1235L1450,1232Z' +
  'M1478,1268L1490,1290L1484,1310L1475,1290ZM1488,1250L1502,1275L1500,1295L1492,1275ZM1410,1250L1414,1244ZM1376,1120L1385,1112L1392,1122L1380,1130ZM1380,1040L1388,1062L1396,1080ZM1440,1158L1455,1178ZM1425,1125L1435,1142ZM1358,1065L1345,1080ZM1275,995L1285,1022ZM1375,1140L1388,1160ZM1362,1135L1378,1150ZM1442,1245L1455,1270ZM1448,1262L1462,1290ZM1435,1250L1448,1262ZM1410,1200L1420,1208ZM1500,1240L1510,1262ZM1490,1255L1508,1290Z';

const HAWAII =
  'M52,78L58,71L60,75L55,80ZM73,66L88,58L93,63L90,75L83,78L74,75ZM139,93L153,85L167,104L163,107L148,106ZM184,109L211,112L207,117L184,116ZM194,123L202,128L202,133L197,132ZM211,120L217,124L228,123L242,133L240,137L222,139L219,131L211,126ZM211,142L215,139L216,142ZM249,155L273,166L297,190L291,197L266,208L257,220L247,213L245,200L239,185L249,172Z';

function UsMap() {
  const ring = { stroke: '#666', strokeWidth: 1.3, vectorEffect: 'non-scaling-stroke' as const, strokeLinejoin: 'round' as const };
  return (
    <svg width={2170} height={1390} viewBox="1149 575 2170 1390" className="block">
      <g transform="translate(2240 1310) scale(0.33333)">
        {WEST.map(([c, d], i) => <path key={i} d={d} fill={c} {...ring} />)}
      </g>
      <g transform="translate(2680 1310) scale(0.33333)">
        {EAST.map(([c, d], i) => <path key={i} d={d} fill={c} {...ring} />)}
      </g>
      <g transform="translate(1300 600) scale(0.58685 0.45914)">
        <path d={ALASKA} fill={GREEN} {...ring} />
        <path d={INLETS} fill="#fff" {...ring} />
        <path d={ISLANDS} fill={GREEN} {...ring} />
        <path d={PANHANDLE} fill={GREEN} {...ring} />
      </g>
      <g transform="translate(1720 1830) scale(0.33333)">
        <path d={HAWAII} fill={BLUE} {...ring} />
      </g>
    </svg>
  );
}

/* ---------- right-hand cards ---------- */

const LEGEND: [string, string][] = [
  ['Medical_Recreational', 'bg-[#7cb274]'],
  ['Medical', 'bg-[#7193b8]'],
  ['CBD', 'bg-[#91c5c1]'],
  ['Illegal', 'bg-[#e67979]'],
];
const STATES = ['(All)', 'Alabama', 'Alaska', 'Arizona', 'Arkansas', 'California', 'Colorado', 'Connecticut', 'Delaware', 'District of Colum...', 'Florida', 'Georgia', 'Hawaii', 'Idaho', 'Illinois', 'Indiana', 'Iowa', 'Kansas', 'Kentucky', ''];

function RightCards() {
  return (
    <div className="ml-[18px] flex w-[462px] shrink-0 flex-col gap-[18px]">
      <Card title="Legalization Status" cls="h-[336px]">
        <div className="flex-1 bg-white">
          {LEGEND.map(([t, c]) => (
            <div key={t} className="flex h-[60px] items-center pl-[11px]">
              <div className={'h-[39px] w-[39px] border-[3px] border-[#666] ' + c} />
              <span className="ml-[16px] pt-[3px] text-[36px] leading-[49px] tracking-[0.65px] text-[#3a3a3a]">{t}</span>
            </div>
          ))}
        </div>
      </Card>
      <Card title="State" cls="h-[1194px]">
        <div className="flex min-h-0 flex-1 bg-white">
          <div className="flex-1 overflow-hidden pt-[9px]">
            {STATES.map((s, i) => (
              <div key={i} className="flex h-[57px] items-center pl-[18px]">
                <Pic x={0} y={0} w={45} h={45}>
                  <rect x={1.500} y={1.500} width={42} height={42} rx={1} fill="#fff" stroke={D} strokeWidth={3} />
                  <path d="M11.500 24.500L19.500 32.500L33.500 13" stroke={D} strokeWidth={5.500} />
                </Pic>
                <span className="ml-[19px] text-[35px] leading-[45px] tracking-[0.6px] text-[#333]">{s}</span>
              </div>
            ))}
          </div>
          <div className="mt-[9px] mr-px flex w-[40px] shrink-0 flex-col items-center bg-[#f0f0f0]">
            <div className="flex h-[42px] items-center">
              <Pic x={0} y={0} w={18} h={16}><path d="M1 13L9 5L17 13" stroke="#505050" strokeWidth={5} /></Pic>
            </div>
            <div className="h-[366px] w-full bg-[#cdcdcd]" />
            <div className="mt-auto flex h-[42px] items-center">
              <Pic x={0} y={0} w={18} h={16}><path d="M1 3L9 11L17 3" stroke="#505050" strokeWidth={5} /></Pic>
            </div>
          </div>
        </div>
      </Card>
    </div>
  );
}

function Workspace() {
  return (
    <div className="ml-[19px] flex w-[2693px] shrink-0 flex-col gap-[18px]">
      <Shelf label="Columns" pill="Longitude (generated)">
        <Pic x={0} y={0} w={32} h={34} cls="-mt-[4px]">
          <path d="M1 0H8V6H1ZM13 0H20V6H13ZM25 0H32V6H25ZM1 9H8V34H1ZM13 9H20V34H13ZM25 9H32V34H25Z" fill={D} />
        </Pic>
      </Shelf>
      <Shelf label="Rows" pill="Latitude (generated)">
        <Pic x={0} y={0} w={36} h={30} cls="-mr-[4px] -mt-[6px]">
          <path d="M0 0H6V6H0ZM9 0H36V6H9ZM0 12H6V18H0ZM9 12H36V18H9ZM0 24H6V30H0ZM9 24H36V30H9Z" fill={D} />
        </Pic>
      </Shelf>
      <div className="flex h-[1548px] shrink-0">
        <div className="w-[2213px] shrink-0 border-[3px] border-[#d4d4d4] bg-white pl-[14px]">
          <div className="flex h-[129px] items-center pt-[16px] pl-[16px] font-['Noto_Sans'] text-[60px] font-light tracking-[1.4px] text-[#333]">US Marijuana Legalization</div>
          <div className="h-[1396px] w-[2176px] border-[3px] border-[#e6e6e6]">
            <UsMap />
          </div>
        </div>
        <RightCards />
      </div>
    </div>
  );
}

/* ---------- sheet tabs and status bar ---------- */

function Tab({ cls, children }: Kids & { cls: string }) {
  return <div className={'flex shrink-0 items-center border-r-[3px] border-[#c8c8c8] text-[30px] whitespace-nowrap text-[#555] ' + cls}>{children}</div>;
}

function SheetTabs() {
  return (
    <div className="flex h-[93px] shrink-0 border-t-[3px] border-b-[3px] border-t-[#c8c8c8] border-b-[#d4d4d4] bg-[#e6e6e6]">
      <Tab cls="w-[393px] pl-[29px] tracking-[-0.1px]">
        <Pic x={0} y={0} w={28} h={34} cls="mr-[15px]">
          <ellipse cx={13.500} cy={7} rx={11.500} ry={5.500} stroke={D} strokeWidth={3} />
          <path d="M2 7V26Q2 32 13.500 32Q25 32 25 26V7" stroke={D} strokeWidth={3} />
        </Pic>
        Data Source
      </Tab>
      <Tab cls="w-[413px] bg-[#fafafa] pl-[18px] pb-[6px] font-semibold tracking-[-0.1px]">US Marijuana Legalization</Tab>
      <Tab cls="w-[375px] pl-[16px] tracking-[-0.15px]">Number of Test Strains</Tab>
      <Tab cls="w-[339px] pl-[17px]">Strain Periodic Table</Tab>
      <Tab cls="w-[286px] pl-[17px]">Ailments Treated</Tab>
      <Tab cls="w-[285px] pl-[16px]">Medicinal Effects</Tab>
      <Tab cls="w-[335px] pl-[16px]">Strain Selector Filter</Tab>
      <Tab cls="w-[441px] pl-[25px]">
        <Pic x={0} y={0} w={34} h={34} cls="mr-[12px]">
          <path d="M1.500 1.500H32.500V32.500H1.500ZM17 1V33M1 17H33" stroke={D} strokeWidth={3} />
        </Pic>
        Strain Selector Filter DB
      </Tab>
      <Tab cls="w-[311px] pl-[24px]">
        <Pic x={0} y={0} w={34} h={36} cls="mr-[12px]">
          <path d="M17 7L32.500 2V29H23L17 34L11 29H1.500V2L17 7Z" stroke={D} strokeWidth={3} />
          <path d="M17 7V13" stroke={D} strokeWidth={3} />
        </Pic>
        Strain Selector
      </Tab>
      <Tab cls="w-[96px] justify-center pl-[3px]">
        <Pic x={0} y={0} w={46} h={46}>
          <path d="M33 22V3.500H2.500V33.500H20M11 27V20M18 27V12M26 27V18" stroke={D} strokeWidth={3} />
          <Plus x={35} y={35} r={11} c={D} w={6} />
        </Pic>
      </Tab>
      <Tab cls="w-[95px] justify-center pl-[3px]">
        <Pic x={0} y={0} w={46} h={46}>
          <path d="M33 22V3.500H2.500V33.500H20M17.500 4V33M2 19H33" stroke={D} strokeWidth={3} />
          <Plus x={35} y={35} r={11} c={D} w={6} />
        </Pic>
      </Tab>
      <Tab cls="w-[96px] justify-center pl-[3px]">
        <Pic x={0} y={0} w={46} h={46}>
          <path d="M33 20V4L18 8L3 4V30L18 35V8" stroke={D} strokeWidth={3} />
          <Plus x={35} y={35} r={11} c={D} w={6} />
        </Pic>
      </Tab>
    </div>
  );
}

function StatusBar() {
  const n = '#bdbdbd';
  return (
    <div className="flex h-[58px] shrink-0 items-center bg-[#ebebeb] text-[26px] text-black">
      <span className="w-[154px] pt-[2px] pl-[9px]">51 marks</span>
      <span className="w-[2585px] pt-[2px] pl-[8px] tracking-[-0.3px]">1 row by 1 column</span>
      <div className="flex h-full w-[384px] items-center border-r-[3px] border-l-[3px] border-[#c8c8c8] pl-[16px]">
        <Pic x={2758} y={2104} w={34} h={44} cls="-mt-[3px]">
          <ellipse cx={2775} cy={2115.500} rx={7} ry={7.500} stroke={D} strokeWidth={3} />
          <path d="M2761.500 2144V2136Q2762 2129 2768 2129H2782Q2788 2129 2788.500 2136V2144Z" stroke={D} strokeWidth={3} />
        </Pic>
        <span className="ml-[28px] w-[257px] text-[27px] tracking-[0.3px]">Jemi Shieh</span>
        <Pic x={0} y={0} w={20} h={11}><path d="M0 0H20L10 11Z" fill="#000" /></Pic>
      </div>
      <div className="h-full w-[81px] border-r-[3px] border-[#c8c8c8]" />
      <div className="h-full w-[81px] border-r-[3px] border-[#c8c8c8]" />
      <div className="h-full w-[141px] border-r-[3px] border-[#c8c8c8]" />
      <div className="flex h-full w-[213px] items-center border-r-[3px] border-[#c8c8c8] pl-[22px]">
        <Pic x={3448} y={2115} w={168} h={26}>
          <path d="M3450 2117H3453V2138H3450ZM3468 2117V2138L3456 2127.500ZM3513 2117V2138L3501 2127.500ZM3549 2117V2138L3561 2127.500ZM3594 2117V2138L3606 2127.500ZM3609 2117H3612V2138H3609Z" fill={n} />
        </Pic>
      </div>
      <Pic x={3660} y={2106} w={178} h={46} cls="ml-[21px]">
        <path d="M3665 2113h9v9h-9zM3677 2113h9v9h-9zM3689 2113h9v9h-9zM3665 2125h9v9h-9zM3677 2125h9v9h-9zM3689 2125h9v9h-9zM3665 2137h9v9h-9zM3677 2137h9v9h-9zM3689 2137h9v9h-9zM3728 2113h33v21h-33zM3728 2137h9v9h-9zM3740 2137h9v9h-9zM3752 2137h9v9h-9z" fill={n} />
        <rect x={3791} y={2113} width={33} height={33} fill={D} />
      </Pic>
    </div>
  );
}

export default function App() {
  return (
    <div className="flex h-[2160px] w-[3840px] flex-col overflow-hidden bg-[#f5f5f5] font-['Open_Sans','Noto_Sans',sans-serif] whitespace-nowrap">
      <TitleBar />
      <MenuBar />
      <Toolbar />
      <div className="flex h-[1770px] shrink-0">
        <DataPane />
        <Cards />
        <Workspace />
      </div>
      <SheetTabs />
      <StatusBar />
      <div className="h-[3px] shrink-0 bg-[#4a4848]" />
    </div>
  );
}
